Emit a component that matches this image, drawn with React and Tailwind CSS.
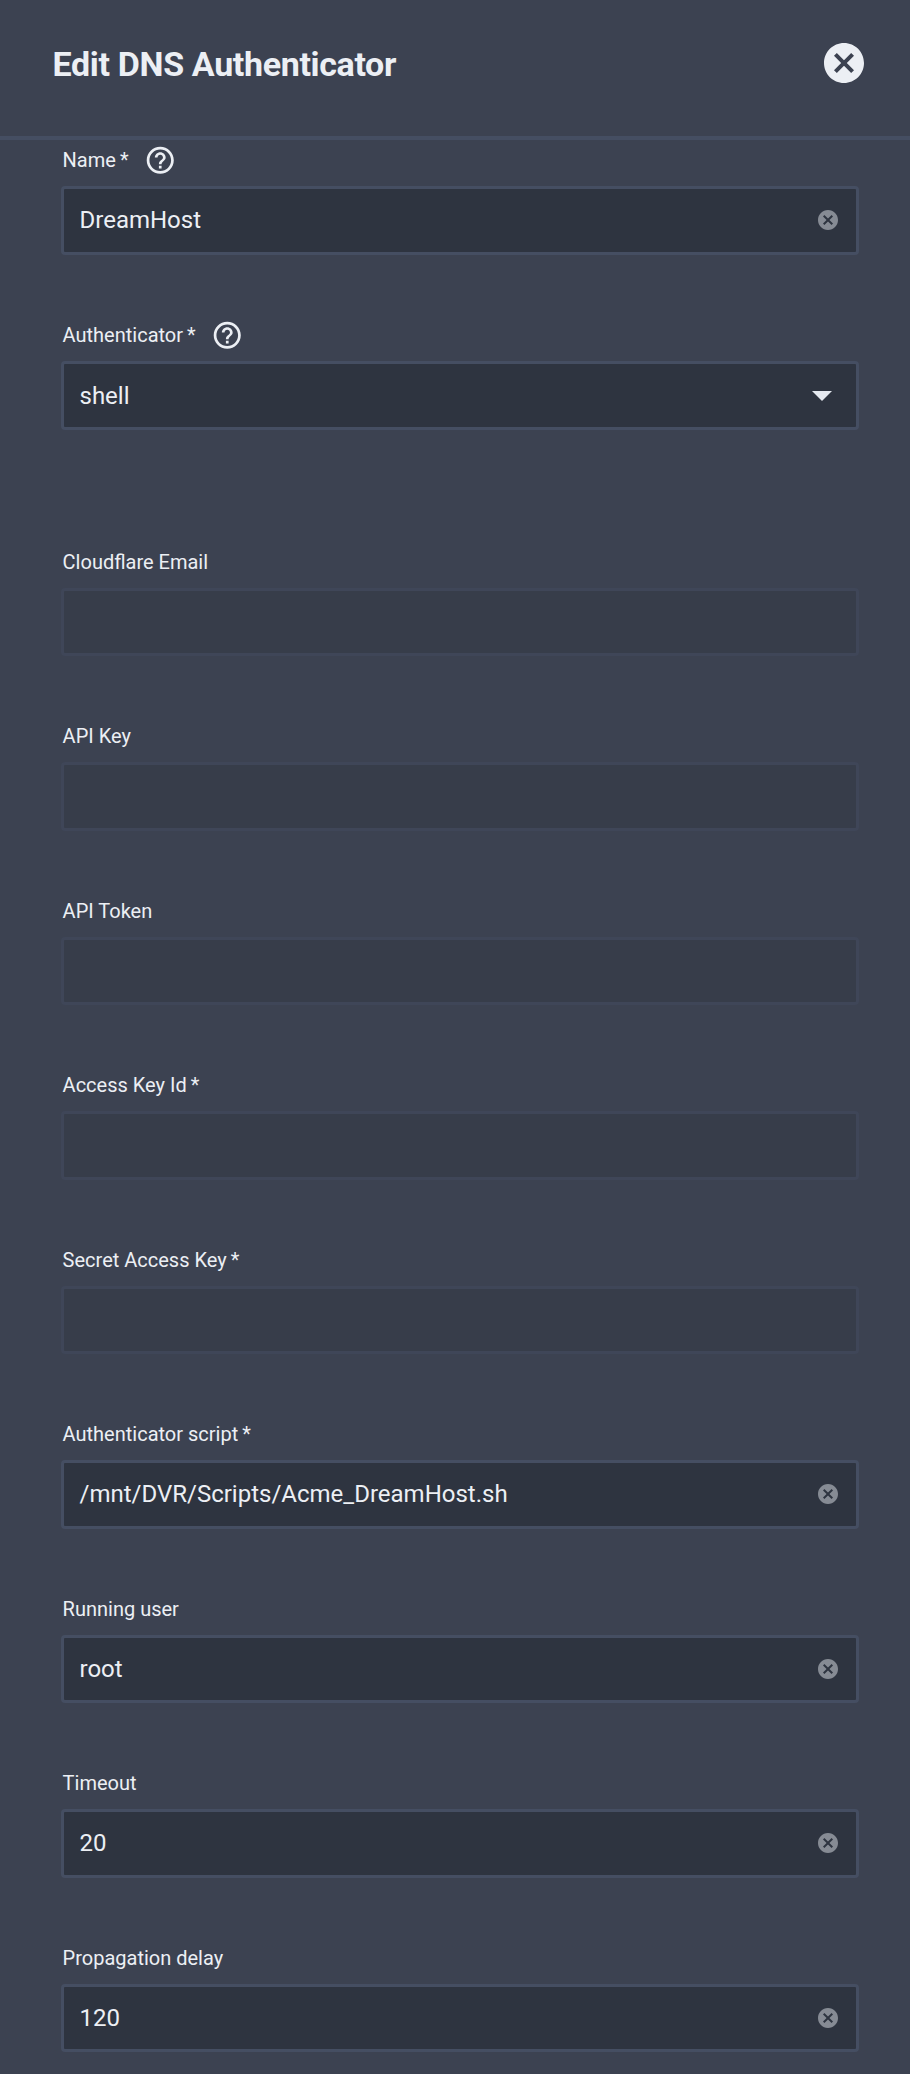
import { MdCancel, MdHelpOutline } from "react-icons/md";

const fields = [
  { label: "Name", required: true, help: true, value: "DreamHost", space: "mb-[70px]" },
  { label: "Authenticator", required: true, help: true, value: "shell", select: true, space: "mb-[121.5px]" },
  { label: "Cloudflare Email", disabled: true },
  { label: "API Key", disabled: true },
  { label: "API Token", disabled: true },
  { label: "Access Key Id", required: true, disabled: true },
  { label: "Secret Access Key", required: true, disabled: true },
  { label: "Authenticator script", required: true, value: "/mnt/DVR/Scripts/Acme_DreamHost.sh" },
  { label: "Running user", value: "root" },
  { label: "Timeout", value: "20" },
  { label: "Propagation delay", value: "120" },
];

function Field({ label, required, help, value, select, disabled, space }) {
  return (
    <div className={space || "mb-[69.5px]"}>
      <div className="-mt-[5.7px] flex h-[32px] items-center pl-[1.6px] text-[20px] leading-[32px] text-[#eceff4]">
        <span>{label}</span>
        {required && <span className="ml-[4px]">*</span>}
        {help && <MdHelpOutline className="mb-[1px] ml-[15.3px] size-[32.5px] shrink-0" />}
      </div>
      <div
        className={
          "mt-[10.2px] flex h-[68.5px] items-center justify-between rounded-[4px] border-[3px] pl-[15.5px] text-[24px] " +
          (disabled ? "border-[#3f4658] bg-[#373d4a]" : "border-[#454e62] bg-[#2e3440]")
        }
      >
        <span className={select ? "text-[#eceff4]" : "pb-[1.1px] text-[#eceff4]"}>{value}</span>
        {!disabled && !select && <MdCancel className="mb-[0.5px] mr-[16px] size-[24px] text-[#868b94]" />}
        {select && (
          <svg className="mr-[24px] mt-[1px] h-[10px] w-[20px]" viewBox="0 0 20 10">
            <path d="M0 0h20L10 10z" fill="#e5e9f0" />
          </svg>
        )}
      </div>
    </div>
  );
}

export default function App() {
  return (
    <div className="h-[2074px] w-[910px] overflow-hidden bg-[#3c4251] font-['Roboto',sans-serif]">
      <header className="flex h-[140px] items-start justify-between border-b-[4px] border-[#454e62] pl-[52.6px] pr-[42px] pt-[39px]">
        <h1 className="pt-[1px] text-[34px] font-bold leading-[48px] tracking-[-0.35px] text-[#eceff4]">
          Edit DNS Authenticator
        </h1>
        <MdCancel className="size-[48px] text-[#eceff4]" />
      </header>
      <main className="pl-[61px] pr-[51px] pt-[9.95px]">
        {fields.map((f) => (
          <Field key={f.label} {...f} />
        ))}
      </main>
    </div>
  );
}
